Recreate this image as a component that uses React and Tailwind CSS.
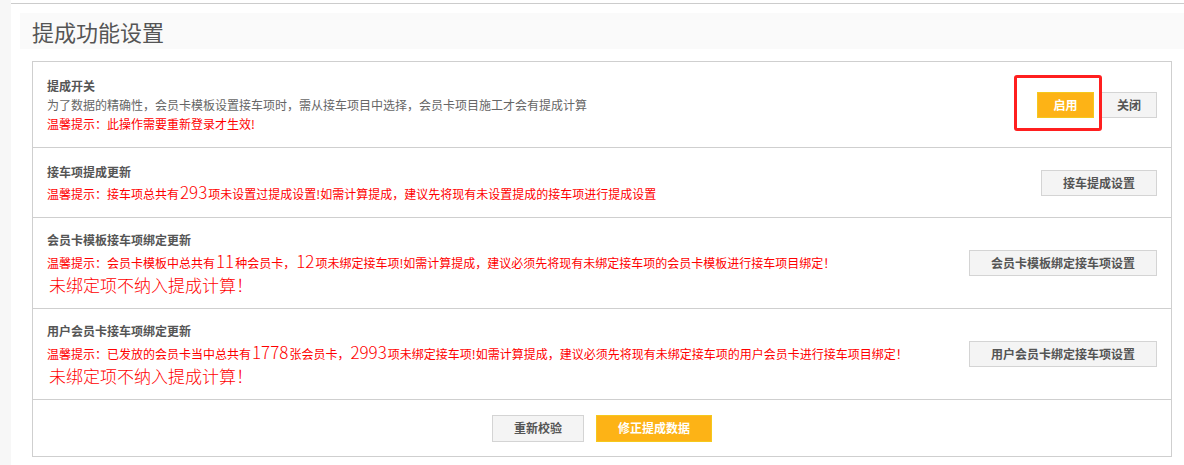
import React from "react";

const font = { fontFamily: '"Noto Sans CJK SC", "Microsoft YaHei", sans-serif' };

function GrayButton({ children, className = "" }) {
  return (
    <button
      className={`h-[26px] bg-[#f4f4f4] border border-[#d4d4d4] text-[12px] font-bold text-[#555] leading-none ${className}`}
    >
      {children}
    </button>
  );
}

function OrangeButton({ children, className = "" }) {
  return (
    <button
      className={`h-[26px] bg-[#fdb316] border border-[#f5c81d] text-[12px] font-bold text-white leading-none ${className}`}
    >
      {children}
    </button>
  );
}

function Big({ children }) {
  return <span className="text-[17px] font-light px-[1px]">{children}</span>;
}

function Row({ className = "", children, action }) {
  return (
    <div className={`flex items-center justify-between pl-[14px] pr-[14px] border-b border-[#cfcfcf] ${className}`}>
      <div className="flex flex-col">{children}</div>
      {action}
    </div>
  );
}

function Title({ children }) {
  return <div className="text-[12px] font-bold text-[#555] leading-[20px]">{children}</div>;
}

export default function App() {
  return (
    <div className="flex w-[1184px] h-[465px] bg-white overflow-hidden" style={font}>
      <div className="w-[11px] h-full bg-[#f7f7f7] shrink-0"></div>
      <div className="flex-1 flex flex-col">
        <div className="h-[3px]"></div>
        <div className="h-px bg-[#cccccc]"></div>
        <div className="pl-[9px] pt-[9px]">
          <div className="h-[36px] bg-[#fafafa] flex items-center pl-[12px]">
            <h1 className="text-[22px] text-[#555] leading-none">提成功能设置</h1>
          </div>
        </div>

        <div className="ml-[21px] mt-[12px] w-[1140px] border border-[#cfcfcf] flex flex-col relative">
          <Row
            className="h-[86px]"
            action={
              <div className="flex items-center gap-[7px]">
                <OrangeButton className="w-[57px]">启用</OrangeButton>
                <GrayButton className="w-[56px]">关闭</GrayButton>
              </div>
            }
          >
            <div className="text-[12px] font-bold text-[#555] leading-[19px]">提成开关</div>
            <div className="text-[12px] text-[#666] leading-[19px]">
              为了数据的精确性，会员卡模板设置接车项时，需从接车项目中选择，会员卡项目施工才会有提成计算
            </div>
            <div className="text-[12px] text-[#ff0000] leading-[19px]">温馨提示：此操作需要重新登录才生效!</div>
          </Row>

          <Row className="h-[70px]" action={<GrayButton className="w-[116px]">接车提成设置</GrayButton>}>
            <Title>接车项提成更新</Title>
            <div className="text-[12px] text-[#ff0000] leading-[20px]">
              温馨提示：接车项总共有<Big>293</Big>项未设置过提成设置!如需计算提成，建议先将现有未设置提成的接车项进行提成设置
            </div>
          </Row>

          <Row className="h-[91px]" action={<GrayButton className="w-[188px]">会员卡模板绑定接车项设置</GrayButton>}>
            <Title>会员卡模板接车项绑定更新</Title>
            <div className="text-[12px] text-[#ff0000] leading-[21px]">
              温馨提示：会员卡模板中总共有<Big>11</Big>种会员卡，<Big>12</Big>项未绑定接车项!如需计算提成，建议必须先将现有未绑定接车项的会员卡模板进行接车项目绑定！
            </div>
            <div className="text-[17px] font-light text-[#ff0000] leading-[23px] pl-[2px]">未绑定项不纳入提成计算！</div>
          </Row>

          <Row className="h-[91px]" action={<GrayButton className="w-[188px]">用户会员卡绑定接车项设置</GrayButton>}>
            <Title>用户会员卡接车项绑定更新</Title>
            <div className="text-[12px] text-[#ff0000] leading-[21px]">
              温馨提示：已发放的会员卡当中总共有<Big>1778</Big>张会员卡，<Big>2993</Big>项未绑定接车项!如需计算提成，建议必须先将现有未绑定接车项的用户会员卡进行接车项目绑定！
            </div>
            <div className="text-[17px] font-light text-[#ff0000] leading-[23px] pl-[2px]">未绑定项不纳入提成计算！</div>
          </Row>

          <div className="h-[56px] flex items-center justify-center gap-[12px]">
            <GrayButton className="w-[92px] h-[27px]">重新校验</GrayButton>
            <OrangeButton className="w-[116px] h-[27px]">修正提成数据</OrangeButton>
          </div>

          <div className="absolute left-[981px] top-[13px] w-[88px] h-[56px] border-[3px] border-[#ff1f1f] rounded-[3px] pointer-events-none"></div>
        </div>
      </div>
    </div>
  );
}
